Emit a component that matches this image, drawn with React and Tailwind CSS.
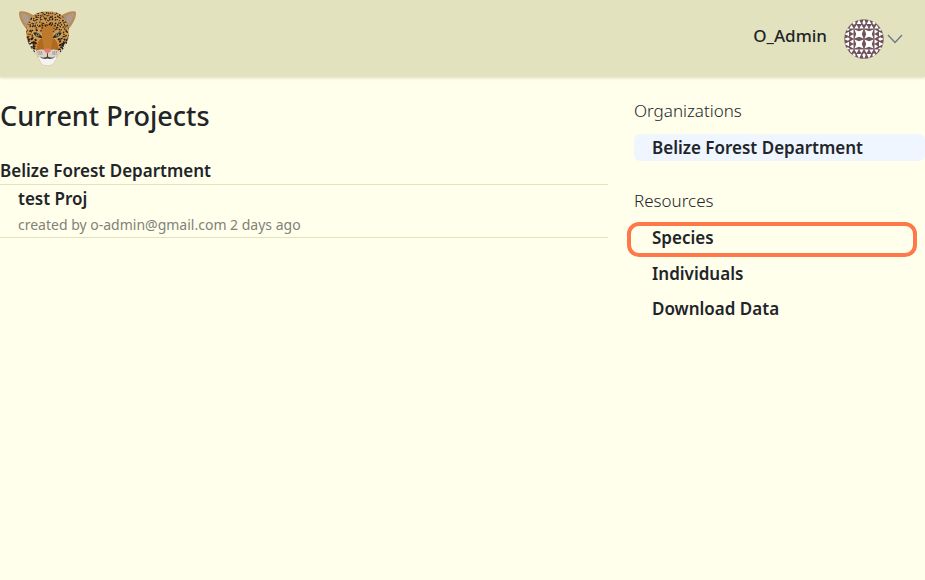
import React from "react";

// Small repeatable pseudo-random sequence, so the coat looks the same on every load.
function sequence(seed) {
  let s = seed;
  return () => {
    s = (s * 16807) % 2147483647;
    return s / 2147483647;
  };
}

function makeSpots() {
  const rand = sequence(4217);
  const spots = [];
  for (let row = 0; row < 17; row++) {
    for (let col = 0; col < 18; col++) {
      const x = 9 + col * 2.4 + (row % 2) * 1.2 + (rand() - 0.5) * 2;
      const y = 3 + row * 2.4 + (rand() - 0.5) * 2;
      const dx = Math.abs(x - 29.5);
      const bridge = y > 16 && dx < 4.5 + (y - 16) * 0.2;
      const eye = Math.abs(dx - 9.5) < 4.8 && Math.abs(y - 25) < 3;
      const cheek = y > 28 && dx < 11.5;
      const low = y > 27 ? 0.35 : 0;
      if (!bridge && !eye && !cheek) {
        spots.push({ x, y, rx: 0.7 + low + rand() * 0.5, ry: 0.4 + low + rand() * 0.4, turn: rand() * 180 });
      }
    }
  }
  return spots;
}

const SPOTS = makeSpots();
const FACE =
  "M29.500 1.500C22 1.300 16.500 3 13.500 7.500C9.500 12 8 18 8.200 24C8.300 30 11 35.500 15 40.500C18 44 20.500 47 22 51C23.500 54.500 26 55.800 29.500 55.800C33 55.800 35.500 54.500 37 51C38.500 47 41 44 44 40.500C48 35.500 50.700 30 50.800 24C51 18 49.500 12 45.500 7.500C42.500 3 37 1.300 29.500 1.500Z";

function Ear() {
  return (
    <>
      <path d="M9.500 20C4 14.500 1 8 1 3C1 1.500 2 1 4 1.200C9 1.700 13.500 3.500 17 6.500Z" fill="#bd8a50" />
      <path d="M9.500 18.500C5.500 13.500 2.800 8 2.700 4.300C2.700 3 3.500 2.700 5 3C9 3.800 12 5.500 14 8Z" fill="#a9957f" />
      <path d="M4 4L7 12M6 4L9 13M8.500 5L10 12" stroke="#bba891" strokeWidth="0.7" />
    </>
  );
}

function Eye() {
  return (
    <>
      <path d="M14 22.500C18 20.500 22.500 22.500 25 28.500C20.500 29 16.500 27 14 22.500Z" fill="#d9b673" />
      <path d="M15 22.800C18.500 21 22 22.800 24.700 28.200C20.500 28.200 17 26.700 15 22.800Z" fill="#29221a" />
      <ellipse cx="19.600" cy="24.900" rx="2" ry="1.600" fill="#8f9560" />
      <circle cx="19.600" cy="24.800" r="0.700" fill="#11120e" />
    </>
  );
}

function JaguarLogo() {
  return (
    <svg viewBox="0 0 59 57" className="h-[57px] w-[59px]" role="img" aria-label="Jaguar">
      <defs>
        <clipPath id="face"><path d={FACE} /></clipPath>
        <linearGradient id="coat" x1="0" y1="0" x2="0" y2="1">
          <stop offset="0" stopColor="#c69553" />
          <stop offset="0.500" stopColor="#d29a50" />
          <stop offset="1" stopColor="#b96f25" />
        </linearGradient>
      </defs>
      <Ear />
      <g transform="translate(59 0) scale(-1 1)"><Ear /></g>
      <path d={FACE} fill="url(#coat)" />
      <g clipPath="url(#face)">
        <path d="M7 28L13 33L19 42L16 46ZM52 28L46 33L40 42L43 46Z" fill="#ebe4d8" />
        <path d="M22 14L37 14L35 24L37 39H22L24 24Z" fill="#bd7a2c" />
        <path d="M24 27L26 39L18 41L20 32ZM35 27L33 39L41 41L39 32Z" fill="#b0691f" />
        {SPOTS.map((spot, i) => (
          <ellipse
            key={i}
            cx={spot.x}
            cy={spot.y}
            rx={spot.rx}
            ry={spot.ry}
            transform={`rotate(${spot.turn} ${spot.x} ${spot.y})`}
            fill="#241b12"
          />
        ))}
        <path d="M17 42C21 38.500 26 39 29.500 42C33 39 38 38.500 42 42C41 47 35 49 29.500 47C24 49 18 47 17 42Z" fill="#d9d3c9" />
        <path d="M20 46.500C25 48.500 34 48.500 39 46.500L37 57H22Z" fill="#f3f3f1" />
        <path d="M22 46.500C25 48.300 27.500 47.800 29.500 46.300C31.500 47.800 34 48.300 37 46.500C35 49.300 31.500 49.300 29.500 48.600C27.500 49.300 24 49.300 22 46.500Z" fill="#4a4642" />
        <path d="M19.500 42h5M20.500 44h4M34.500 42h5M34.500 44h4" stroke="#4b443b" strokeWidth="0.800" strokeDasharray="1 0.800" />
      </g>
      <Eye />
      <g transform="translate(59 0) scale(-1 1)"><Eye /></g>
      <path d="M26 39C28 38.300 31 38.300 33 39C33.500 40.500 31 43 29.500 43.500C28 43 25.500 40.500 26 39Z" fill="#e47c70" />
      <path d="M29.500 43.300V47" stroke="#3f302a" strokeWidth="0.900" />
    </svg>
  );
}

const CELLS = [0, 1, 2, 3];

function IdenticonCell({ row, col }) {
  const middle = row > 0 && row < 3 && col > 0 && col < 3;
  if (middle) {
    return <path d="M0.500 0.500L5 2.200L9.500 0.500L7.800 5L9.500 9.500L5 7.800L0.500 9.500L2.200 5Z" fill="#fff" />;
  }
  let turn = 0;
  if (row === 3) turn = 180;
  else if (col === 0 && row > 0) turn = 270;
  else if (col === 3 && row > 0) turn = 90;
  return (
    <path
      d="M5 0.500L7.300 5H2.700ZM2.700 5.800L4.700 9.500H0.300ZM7.300 5.800L9.700 9.500H5.300ZM0 0L1.700 4L0 6ZM10 0V6L8.300 4Z"
      fill="#fff"
      transform={`rotate(${turn} 5 5)`}
    />
  );
}

function Avatar() {
  return (
    <svg viewBox="0 0 40 40" className="size-10" aria-hidden="true">
      <defs><clipPath id="round"><circle cx="20" cy="20" r="19.700" /></clipPath></defs>
      <g clipPath="url(#round)">
        <rect width="40" height="40" fill="#6f535a" />
        {CELLS.map((row) =>
          CELLS.map((col) => (
            <g key={`${row}-${col}`} transform={`translate(${col * 10} ${row * 10})`}>
              <IdenticonCell row={row} col={col} />
            </g>
          ))
        )}
      </g>
    </svg>
  );
}

function Header() {
  return (
    <header className="flex h-[77px] items-center justify-between bg-[#e3e2be] pl-[18px] pr-[22px] shadow-[0_1px_3px_rgba(0,0,0,0.15)]">
      <a href="#home"><JaguarLogo /></a>
      <button type="button" className="flex items-center" aria-label="O_Admin account menu">
        <span className="pr-[17px] pb-1.5 text-[17px] font-medium">O_Admin</span>
        <Avatar />
        <svg viewBox="0 0 16 10" className="ml-[3px] h-[10px] w-4" fill="none" stroke="#6b7785" strokeWidth="1.300" aria-hidden="true">
          <path d="M1 1L8 8.500L15 1" />
        </svg>
      </button>
    </header>
  );
}

function Projects() {
  return (
    <section className="min-w-0 flex-1">
      <h1 className="text-[27px] font-medium leading-[34px]">Current Projects</h1>
      <h2 className="mt-[25px] border-b border-[#e2e2be] text-[17px] font-semibold leading-[26px]">Belize Forest Department</h2>
      <article className="border-b border-[#e2e2be] pl-[18px]">
        <h3 className="text-[17px] font-semibold leading-7"><a href="#test-proj">test Proj</a></h3>
        <p className="text-[14px] leading-6 text-[#828279]">created by o-admin@gmail.com 2 days ago</p>
      </article>
    </section>
  );
}

function Sidebar() {
  return (
    <aside className="w-[291px] shrink-0">
      <h2 className="text-[17px] font-light leading-6">Organizations</h2>
      <a href="#organization" className="mt-[11px] block rounded-md bg-[#eff6ff] pl-[18px] text-[17px] font-semibold leading-[27px]">
        Belize Forest Department
      </a>
      <h2 className="mt-7 text-[17px] font-light leading-6">Resources</h2>
      <nav aria-label="Resources" className="-ml-[7px] mr-2 mt-[9px] text-[17px] font-semibold">
        <a href="#species" className="block h-[35px] rounded-xl border-4 border-[#ff7849] pl-[21px] leading-6">Species</a>
        <a href="#individuals" className="block pl-[25px] leading-[34px]">Individuals</a>
        <a href="#download" className="block pl-[25px] leading-[35px]">Download Data</a>
      </nav>
    </aside>
  );
}

export default function App() {
  return (
    <div className="min-h-screen bg-[#ffffec] font-['Noto_Sans','Open_Sans',sans-serif] text-[#212529]">
      <Header />
      <main className="flex gap-[26px] pt-[22px]">
        <Projects />
        <Sidebar />
      </main>
    </div>
  );
}
